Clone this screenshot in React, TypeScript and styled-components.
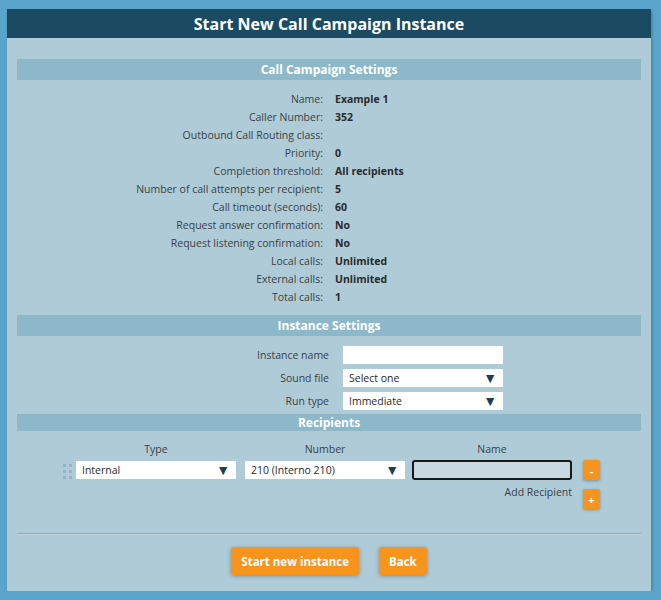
import * as React from "react";
import styled, { createGlobalStyle } from "styled-components";

const colors = {
	page: "#5aa5cb",
	header: "#1b4b62",
	panel: "#afcbd8",
	bar: "#8db8c9",
	orange: "#f7941d",
	text: "#2a2a2a",
	label: "#3a3f42",
	arrow: "#1d3f50",
};

const Global = createGlobalStyle`
	body {
		margin: 0;
		background: ${colors.page};
		font-family: "Open Sans", "Liberation Sans", sans-serif;
	}
`;

const Panel = styled.div`
	margin: 9px 0 0 7px;
	width: 644px;
	height: 582px;
	background: ${colors.panel};
	box-shadow: 1px 2px 3px rgba(0, 0, 0, 0.25);
	display: flex;
	flex-direction: column;
`;

const Title = styled.div`
	height: 29px;
	background: ${colors.header};
	color: #fff;
	font-weight: bold;
	font-size: 16px;
	display: flex;
	align-items: center;
	justify-content: center;
`;

const Body = styled.div`
	padding: 21px 10px 0;
	display: flex;
	flex-direction: column;
`;

const Bar = styled.div<{ $h?: number }>`
	height: ${(p) => p.$h || 21}px;
	background: ${colors.bar};
	color: #fff;
	font-weight: bold;
	font-size: 12px;
	display: flex;
	align-items: center;
	justify-content: center;
`;

const InfoGrid = styled.div`
	display: grid;
	grid-template-columns: 1fr 1fr;
	column-gap: 12px;
	grid-auto-rows: 18px;
	padding: 10px 0 9px;
	font-size: 10.5px;
	align-items: center;
`;

const Label = styled.span`
	text-align: right;
	color: ${colors.label};
`;

const Value = styled.span`
	font-weight: bold;
	color: ${colors.text};
`;

const FormGrid = styled.div`
	display: grid;
	grid-template-columns: 312px 160px;
	column-gap: 14px;
	row-gap: 5px;
	grid-auto-rows: 18px;
	padding: 10px 0 4px;
	font-size: 10.5px;
	align-items: center;
`;

const TextBox = styled.input`
	height: 18px;
	border: none;
	padding: 0 6px;
	box-sizing: border-box;
	background: #fff;
	font: inherit;
`;

const SelectBox = styled.div<{ $ml?: number }>`
	width: 160px;
	height: 18px;
	margin-left: ${(p) => p.$ml || 0}px;
	background: #fff;
	box-sizing: border-box;
	padding: 0 6px 0 6px;
	display: flex;
	align-items: center;
	justify-content: space-between;
	font-size: 10.5px;
	color: ${colors.text};
	&::after {
		content: "▼";
		color: ${colors.arrow};
		font-size: 14px;
		line-height: 1;
	}
`;

const Columns = styled.div`
	display: flex;
	padding: 11px 0 0 59px;
	font-size: 10.5px;
	color: ${colors.label};
`;

const ColHead = styled.span<{ $ml: number }>`
	width: 160px;
	margin-left: ${(p) => p.$ml}px;
	text-align: center;
`;

const RecipientRow = styled.div`
	display: flex;
	align-items: center;
	padding: 4px 0 0 45px;
	height: 20px;
`;

const Handle = styled.div`
	width: 10px;
	height: 15px;
	margin-right: 4px;
	display: grid;
	grid-template-columns: 3px 3px;
	grid-template-rows: repeat(3, 3px);
	gap: 3px 3px;
	padding: 1px 0 0 1px;
	box-sizing: border-box;
	span {
		background: #94b3c3;
	}
`;

const NameBox = styled.input`
	width: 160px;
	height: 20px;
	box-sizing: border-box;
	border: 2px solid #1a1a1a;
	border-radius: 3px;
	background: #c9d9e1;
	margin-left: 7px;
	font: inherit;
`;

const Square = styled.button<{ $ml: number }>`
	width: 17px;
	height: 20px;
	margin-left: ${(p) => p.$ml}px;
	border: none;
	border-radius: 2px;
	background: ${colors.orange};
	color: #fff;
	font-weight: bold;
	font-size: 11px;
	padding: 0;
	box-shadow: 0 1px 3px rgba(0, 0, 0, 0.3);
	font-family: inherit;
`;

const AddRow = styled.div`
	display: flex;
	align-items: center;
	justify-content: flex-end;
	padding: 9px 41px 0 0;
	font-size: 10.5px;
	color: ${colors.label};
	span {
		margin-top: -14px;
	}
`;

const Divider = styled.div`
	margin-top: 24px;
	height: 1px;
	background: #8aabba;
	border-bottom: 1px solid #c2d7e0;
`;

const Actions = styled.div`
	display: flex;
	justify-content: center;
	gap: 20px;
	padding: 12px 0 0;
`;

const ActionButton = styled.button`
	height: 28px;
	padding: 0 10px;
	border: none;
	border-radius: 3px;
	background: ${colors.orange};
	color: #fff;
	font-family: inherit;
	font-weight: bold;
	font-size: 11.5px;
	box-shadow: 0 1px 4px rgba(0, 0, 0, 0.3);
`;

const info: [string, string][] = [
	["Name:", "Example 1"],
	["Caller Number:", "352"],
	["Outbound Call Routing class:", ""],
	["Priority:", "0"],
	["Completion threshold:", "All recipients"],
	["Number of call attempts per recipient:", "5"],
	["Call timeout (seconds):", "60"],
	["Request answer confirmation:", "No"],
	["Request listening confirmation:", "No"],
	["Local calls:", "Unlimited"],
	["External calls:", "Unlimited"],
	["Total calls:", "1"],
];

export default function App() {
	return (
		<>
			<Global />
			<Panel>
				<Title>Start New Call Campaign Instance</Title>
				<Body>
					<Bar>Call Campaign Settings</Bar>
					<InfoGrid>
						{info.map(([l, v]) => (
							<React.Fragment key={l}>
								<Label>{l}</Label>
								<Value>{v}</Value>
							</React.Fragment>
						))}
					</InfoGrid>
					<Bar>Instance Settings</Bar>
					<FormGrid>
						<Label>Instance name</Label>
						<TextBox />
						<Label>Sound file</Label>
						<SelectBox>Select one</SelectBox>
						<Label>Run type</Label>
						<SelectBox>Immediate</SelectBox>
					</FormGrid>
					<Bar $h={17}>Recipients</Bar>
					<Columns>
						<ColHead $ml={0}>Type</ColHead>
						<ColHead $ml={9}>Number</ColHead>
						<ColHead $ml={7}>Name</ColHead>
					</Columns>
					<RecipientRow>
						<Handle>
							<span /><span /><span /><span /><span /><span />
						</Handle>
						<SelectBox>Internal</SelectBox>
						<SelectBox $ml={9}>210 (Interno 210)</SelectBox>
						<NameBox />
						<Square $ml={11}>-</Square>
					</RecipientRow>
					<AddRow>
						<span>Add Recipient</span>
						<Square $ml={11}>+</Square>
					</AddRow>
					<Divider />
					<Actions>
						<ActionButton>Start new instance</ActionButton>
						<ActionButton>Back</ActionButton>
					</Actions>
				</Body>
			</Panel>
		</>
	);
}
